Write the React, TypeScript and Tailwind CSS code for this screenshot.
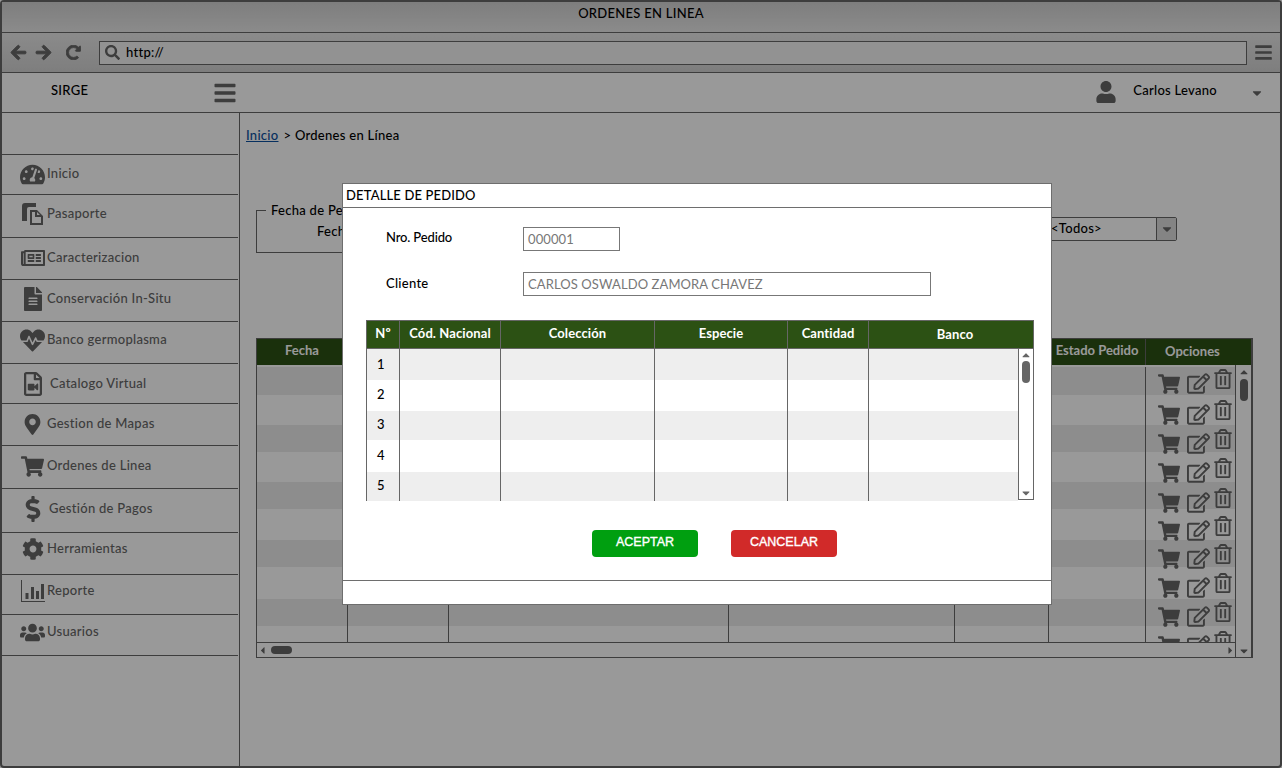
import type { ReactNode } from 'react';
import {
    FaArrowLeft,
    FaArrowRight,
    FaBars,
    FaCaretDown,
    FaCaretLeft,
    FaCaretRight,
    FaCaretUp,
    FaCog,
    FaDollarSign,
    FaFileAlt,
    FaHeartbeat,
    FaMapMarkerAlt,
    FaRedoAlt,
    FaRegEdit,
    FaRegFileVideo,
    FaRegNewspaper,
    FaRegTrashAlt,
    FaSearch,
    FaShoppingCart,
    FaTachometerAlt,
    FaUser,
    FaUsers,
} from 'react-icons/fa';

const PassportIcon = () => (
    <svg width="24" height="24" viewBox="0 0 24 24" fill="currentColor">
        <path d="M1 4a3 3 0 0 1 3-3h11v4H8a2 2 0 0 0-2 2v12H1z" />
        <path d="M9 8h7l6 6v9H9zM11 10v11h9v-6h-6v-5zM16 10v3h3z" fillRule="evenodd" />
    </svg>
);

const ReportIcon = () => (
    <svg width="24" height="24" viewBox="0 0 24 24" fill="currentColor">
        <path d="M0 1h1v21h24v1H0z" />
        <path d="M4.500 14h3v6h-3zM10 8h3v12h-3zM15 12h3v8h-3zM20 5h3v15h-3z" />
    </svg>
);

type NavItem = { label: string; icon: ReactNode; box: string; text?: string };

const navItems: NavItem[] = [
    { label: 'Inicio', icon: <FaTachometerAlt size={25} />, box: 'h-[40px] pt-[11px]' },
    { label: 'Pasaporte', icon: <PassportIcon />, box: 'h-[43px] pt-[11px]' },
    { label: 'Caracterizacion', icon: <FaRegNewspaper size={24} />, box: 'h-[42px] pt-[12px]' },
    { label: 'Conservación In-Situ', icon: <FaFileAlt size={24} />, box: 'h-[42px] pt-[11px]' },
    { label: 'Banco germoplasma', icon: <FaHeartbeat size={25} />, box: 'h-[42px] pt-[10px]' },
    { label: 'Catalogo Virtual', icon: <FaRegFileVideo size={24} />, box: 'h-[40px] pt-[12px]', text: 'ml-[3px]' },
    { label: 'Gestion de Mapas', icon: <FaMapMarkerAlt size={21} />, box: 'h-[42px] pt-[12px]' },
    { label: 'Ordenes de Linea', icon: <FaShoppingCart size={23} />, box: 'h-[43px] pt-[12px]' },
    { label: 'Gestión de Pagos', icon: <FaDollarSign size={26} />, box: 'h-[44px] pt-[12px]', text: 'ml-[2px]' },
    { label: 'Herramientas', icon: <FaCog size={22} />, box: 'h-[42px] pt-[8px]' },
    { label: 'Reporte', icon: <ReportIcon />, box: 'h-[40px] pt-[8px]' },
    { label: 'Usuarios', icon: <FaUsers size={25} />, box: 'h-[41px] pt-[9px]' },
];

const orderRows = [
    { box: 'h-[28px]', icons: 'pt-[6px]', bg: 'bg-[#ececec]' },
    { box: 'h-[30px]', icons: 'pt-[9px]', bg: 'bg-white' },
    { box: 'h-[27px]', icons: 'pt-[8px]', bg: 'bg-[#ececec]' },
    { box: 'h-[30px]', icons: 'pt-[10px]', bg: 'bg-white' },
    { box: 'h-[27px]', icons: 'pt-[10px]', bg: 'bg-[#ececec]' },
    { box: 'h-[31px]', icons: 'pt-[11px]', bg: 'bg-white' },
    { box: 'h-[27px]', icons: 'pt-[8px]', bg: 'bg-[#ececec]' },
    { box: 'h-[32px]', icons: 'pt-[10px]', bg: 'bg-white' },
    { box: 'h-[27px]', icons: 'pt-[7px]', bg: 'bg-[#ececec]' },
    { box: 'h-[30px]', icons: 'pt-[9px]', bg: 'bg-white' },
];

const detailRows = [
    { n: 1, box: 'h-[31px]', bg: 'bg-[#eeeeee]', num: '' },
    { n: 2, box: 'h-[31px]', bg: 'bg-white', num: 'pb-[2px]' },
    { n: 3, box: 'h-[29px]', bg: 'bg-[#eeeeee]', num: 'pb-[2px]' },
    { n: 4, box: 'h-[32px]', bg: 'bg-white', num: 'pb-[1px]' },
    { n: 5, box: 'h-[29px]', bg: 'bg-[#eeeeee]', num: 'pb-[2px]' },
];

const OrdersTable = () => (
    <div className="mt-[85px] flex h-[320px] w-[997px] flex-col border-b border-l border-r-2 border-t border-[#666]">
        <div className="grid h-[26px] shrink-0 grid-cols-[91px_101px_280px_226px_94px_97px_1fr] bg-[#2c5114] text-[13px] font-bold leading-[23px] tracking-normal text-white">
            <div className="border-r border-[#2c5114] text-center">Fecha</div>
            <div className="border-r border-[#666]" />
            <div className="border-r border-[#666]" />
            <div className="border-r border-[#666]" />
            <div className="border-r border-[#666]" />
            <div className="border-r border-[#666] text-center">Estado Pedido</div>
            <div className="pl-[19px] leading-[24px]">Opciones</div>
        </div>
        <div className="flex min-h-0 flex-1">
            <div className="flex min-w-0 flex-1 flex-col">
                <div className="min-h-0 flex-1 overflow-hidden pt-[2px]">
                    {orderRows.map((row, i) => (
                        <div key={i} className={`grid grid-cols-[91px_101px_280px_226px_94px_97px_1fr] ${row.box} ${row.bg}`}>
                            <div className="border-r border-[#666]" />
                            <div className="border-r border-[#666]" />
                            <div className="border-r border-[#666]" />
                            <div className="border-r border-[#666]" />
                            <div className="border-r border-[#666]" />
                            <div className="border-r border-[#666]" />
                            <div className={`flex items-start pl-[12px] text-[#666] ${row.icons}`}>
                                <FaShoppingCart size={22} className="shrink-0" />
                                <FaRegEdit size={23} className="ml-[7px] mt-[-1px] shrink-0" />
                                <FaRegTrashAlt size={20} className="ml-[3px] mt-[-4px] shrink-0" />
                            </div>
                        </div>
                    ))}
                </div>
                <div className="flex h-[15px] shrink-0 items-center justify-between border-t border-[#666] bg-white text-[#666]">
                    <div className="flex items-center">
                        <FaCaretLeft size={11} className="ml-[0px]" />
                        <div className="ml-[3px] h-[8px] w-[21px] rounded-full bg-[#666]" />
                    </div>
                    <FaCaretRight size={11} className="mr-[-1px]" />
                </div>
            </div>
            <div className="flex w-[16px] shrink-0 flex-col items-center border-l border-[#666] bg-white text-[#666]">
                <FaCaretUp size={12} className="mt-[1px]" />
                <div className="mt-[1px] h-[22px] w-[8px] rounded-full bg-[#666]" />
                <FaCaretDown size={12} className="mt-auto" />
            </div>
        </div>
    </div>
);

const DetailModal = () => (
    <div className="absolute left-[342px] top-[183px] flex h-[422px] w-[710px] flex-col border border-[#6e6e6e] bg-white font-[Lato,sans-serif] text-black">
        <div className="h-[24px] shrink-0 border-b border-[#6e6e6e] pl-[3px] text-[13px] font-medium leading-[23px] tracking-[0.15px]">DETALLE DE PEDIDO</div>
        <div className="flex-1 pl-[43px]">
            <div className="mt-[19px] flex items-center">
                <div className="mb-[2px] w-[137px] text-[13px] font-medium tracking-[-0.15px]">Nro. Pedido</div>
                <div className="h-[24px] w-[97px] border border-[#777] pl-[4px] text-[13px] leading-[22px] tracking-[0.1px] text-[#777]">000001</div>
            </div>
            <div className="mt-[21px] flex items-center">
                <div className="w-[137px] text-[13px] font-medium">Cliente</div>
                <div className="h-[24px] w-[408px] border border-[#777] pl-[4px] text-[13px] leading-[22px] tracking-[0.1px] text-[#777]">CARLOS OSWALDO ZAMORA CHAVEZ</div>
            </div>
            <div className="ml-[-20px] mt-[24px] w-[668px]">
                <div className="grid h-[29px] grid-cols-[33px_101px_154px_133px_81px_1fr] border border-[#666] bg-[#2c5114] text-center text-[13px] font-bold leading-[25px] tracking-[0.1px] text-white">
                    <div className="border-r border-[#666]">Nº</div>
                    <div className="border-r border-[#666]">Cód. Nacional</div>
                    <div className="border-r border-[#666]">Colección</div>
                    <div className="border-r border-[#666]">Especie</div>
                    <div className="border-r border-[#666]">Cantidad</div>
                    <div className="pl-[8px] leading-[27px]">Banco</div>
                </div>
                <div className="flex">
                    <div className="min-w-0 flex-1 border-l border-[#666]">
                        {detailRows.map((row) => (
                            <div key={row.n} className={`grid grid-cols-[33px_101px_154px_133px_81px_1fr] ${row.box} ${row.bg}`}>
                                <div className={`flex items-center justify-center border-r border-[#666] pr-[4px] text-[13px] font-medium ${row.num}`}>{row.n}</div>
                                <div className="border-r border-[#666]" />
                                <div className="border-r border-[#666]" />
                                <div className="border-r border-[#666]" />
                                <div className="border-r border-[#666]" />
                                <div />
                            </div>
                        ))}
                    </div>
                    <div className="flex h-[151px] w-[16px] shrink-0 flex-col items-center border-b border-l border-r border-[#666] text-[#666]">
                        <FaCaretUp size={12} />
                        <div className="h-[22px] w-[8px] rounded-full bg-[#666]" />
                        <FaCaretDown size={12} className="mt-auto" />
                    </div>
                </div>
            </div>
            <div className="ml-[206px] mt-[29px] flex gap-[33px] font-['Liberation_Sans',sans-serif] text-[12.5px] font-normal tracking-normal text-white [-webkit-text-stroke:0.35px_white]">
                <button className="h-[27px] w-[106px] rounded-[4px] bg-[#009f10] pb-[2px]">ACEPTAR</button>
                <button className="h-[27px] w-[106px] rounded-[4px] bg-[#d12a29] pb-[2px]">CANCELAR</button>
            </div>
        </div>
        <div className="h-[24px] shrink-0 border-t border-[#6e6e6e]" />
    </div>
);

export default function App() {
    return (
        <div className="relative h-[768px] w-[1282px] overflow-hidden bg-white font-[Lato,sans-serif] tracking-[0.28px] text-black">
            <div className="flex h-full flex-col rounded-[4px] border-2 border-[#666]">
                <div className="h-[31px] shrink-0 border-b border-[#666] bg-linear-to-b from-[#d2d2d2] to-[#e8e8e8] text-center text-[13px] font-medium leading-[22px]">
                    ORDENES EN LINEA
                </div>
                <div className="flex h-[40px] shrink-0 items-center border-b border-[#666] bg-linear-to-b from-[#e8e8e8] to-[#d2d2d2] text-[#666]">
                    <FaArrowLeft size={17} stroke="currentColor" strokeWidth={30} className="ml-[8px]" />
                    <FaArrowRight size={17} stroke="currentColor" strokeWidth={30} className="ml-[8px]" />
                    <FaRedoAlt size={15} stroke="currentColor" strokeWidth={30} className="ml-[14px]" />
                    <div className="ml-[18px] flex h-[24px] w-[1148px] items-center border border-[#666] bg-[#f4f4f4] pl-[5px] text-black">
                        <FaSearch size={15} className="text-[#666]" />
                        <span className="ml-[6px] text-[13px] font-medium">http://</span>
                    </div>
                    <FaBars size={19} className="ml-[7px]" />
                </div>
                <div className="flex h-[40px] shrink-0 items-center border-b border-[#666] bg-white">
                    <span className="mb-[3px] ml-[49px] text-[13px] font-medium">SIRGE</span>
                    <FaBars size={24} className="ml-[125px] text-[#666]" />
                    <FaUser size={22} className="mb-[1px] ml-auto text-[#666]" />
                    <span className="mb-[3px] ml-[16px] text-[13px] font-medium">Carlos Levano</span>
                    <FaCaretDown size={14} className="ml-[33px] mr-[16px] text-[#666]" />
                </div>
                <div className="flex min-h-0 flex-1">
                    <div className="w-[238px] shrink-0 border-r border-[#666] pr-px text-[13px] font-medium text-[#666]">
                        <div className="h-[42px] border-b border-[#666]" />
                        {navItems.map((item) => (
                            <div key={item.label} className={`border-b border-[#666] pl-[16px] ${item.box}`}>
                                <div className="flex h-4 items-center">
                                    <div className="flex w-[29px] shrink-0 justify-center">{item.icon}</div>
                                    <span className={item.text}>{item.label}</span>
                                </div>
                            </div>
                        ))}
                    </div>
                    <div className="min-w-0 flex-1 pl-[16px] pt-[14px]">
                        <div className="ml-[-10px] flex h-4 items-center text-[13px] font-medium leading-4">
                            <a className="text-[#0b4f9e] underline">Inicio</a>
                            <span className="ml-[5px]">&gt; Ordenes en Línea</span>
                        </div>
                        <div className="mt-[59px] flex items-start">
                            <fieldset className="h-[51px] w-[600px] border border-[#666] pl-[9px]">
                                <legend className="px-[5px] text-[13px] font-medium leading-4">Fecha de Pedido</legend>
                                <div className="ml-[51px] mt-[4px] text-[13px] font-medium">Fecha</div>
                            </fieldset>
                            <div className="ml-[189px] mt-[15px] flex h-[24px] w-[132px] items-center rounded-r-[2px] border border-[#666] bg-white pl-[5px] text-[13px] font-medium">
                                &lt;Todos&gt;
                                <div className="ml-auto flex h-full w-[20px] items-center justify-center border-l border-[#666] bg-[#dcdcdc] text-[#666]">
                                    <FaCaretDown size={14} />
                                </div>
                            </div>
                        </div>
                        <OrdersTable />
                    </div>
                </div>
            </div>
            <div className="absolute inset-0 bg-black/40" />
            <DetailModal />
        </div>
    );
}
